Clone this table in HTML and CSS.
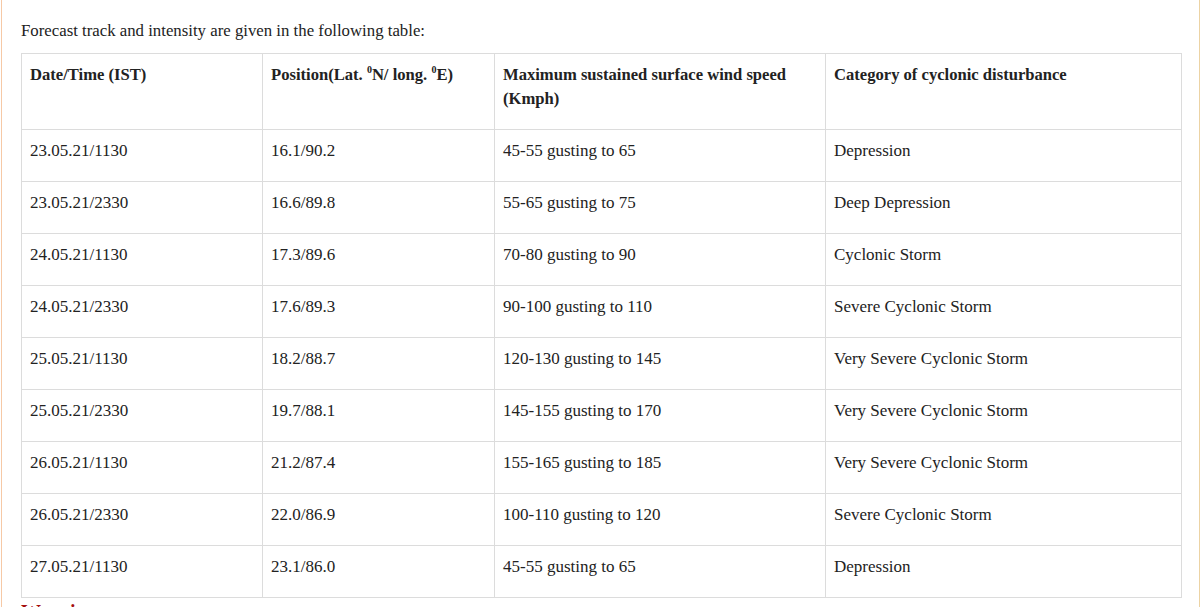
FILE: index.html
```html
<!DOCTYPE html>
<html>
<head>
<meta charset="utf-8">
<link rel="stylesheet" href="styles.css">
</head>
<body>
<div class="page">
  <div class="content">
    <p class="intro">Forecast track and intensity are given in the following table:</p>
    <table class="forecast">
      <colgroup>
        <col class="c1"><col class="c2"><col class="c3"><col class="c4">
      </colgroup>
      <thead>
        <tr>
          <th>Date/Time (IST)</th>
          <th>Position(Lat. <sup>0</sup>N/ long. <sup>0</sup>E)</th>
          <th>Maximum sustained surface wind speed (Kmph)</th>
          <th>Category of cyclonic disturbance</th>
        </tr>
      </thead>
      <tbody>
        <tr><td>23.05.21/1130</td><td>16.1/90.2</td><td>45-55 gusting to 65</td><td>Depression</td></tr>
        <tr><td>23.05.21/2330</td><td>16.6/89.8</td><td>55-65 gusting to 75</td><td>Deep Depression</td></tr>
        <tr><td>24.05.21/1130</td><td>17.3/89.6</td><td>70-80 gusting to 90</td><td>Cyclonic Storm</td></tr>
        <tr><td>24.05.21/2330</td><td>17.6/89.3</td><td>90-100 gusting to 110</td><td>Severe Cyclonic Storm</td></tr>
        <tr><td>25.05.21/1130</td><td>18.2/88.7</td><td>120-130 gusting to 145</td><td>Very Severe Cyclonic Storm</td></tr>
        <tr><td>25.05.21/2330</td><td>19.7/88.1</td><td>145-155 gusting to 170</td><td>Very Severe Cyclonic Storm</td></tr>
        <tr><td>26.05.21/1130</td><td>21.2/87.4</td><td>155-165 gusting to 185</td><td>Very Severe Cyclonic Storm</td></tr>
        <tr><td>26.05.21/2330</td><td>22.0/86.9</td><td>100-110 gusting to 120</td><td>Severe Cyclonic Storm</td></tr>
        <tr><td>27.05.21/1130</td><td>23.1/86.0</td><td>45-55 gusting to 65</td><td>Depression</td></tr>
      </tbody>
    </table>
    <h4 class="warn">Warnings</h4>
  </div>
</div>
</body>
</html>
```
FILE: styles.css
```css
html, body {
  margin: 0;
  padding: 0;
  background: #ffffff;
}
body {
  font-family: "Liberation Serif", "Times New Roman", serif;
  color: #222222;
  font-size: 17px;
  overflow: hidden;
  height: 607px;
}
.page {
  width: 1197px;
  margin-left: 1px;
  border-left: 1px solid #f6c9a6;
  border-right: 1px solid #ecd3a4;
  min-height: 607px;
}
.content {
  padding: 19px 0 0 19px;
}
.intro {
  margin: 0 0 10px 0;
  line-height: 24px;
  font-size: 16.8px;
}
.forecast {
  border-collapse: collapse;
  width: 1160px;
  table-layout: fixed;
  border: 1px solid #dcdcdc;
}
.c1 { width: 241px; }
.c2 { width: 232px; }
.c3 { width: 331px; }
.c4 { width: 356px; }
.forecast th,
.forecast td {
  border: 1px solid #dcdcdc;
  text-align: left;
  vertical-align: top;
  padding: 9px 8px 18px 8px;
  line-height: 24px;
  font-size: 17px;
}
.forecast th {
  font-weight: bold;
  font-size: 16.6px;
}
.forecast sup {
  font-size: 10px;
  line-height: 0;
  vertical-align: 7px;
}
.warn {
  margin: 0;
  padding-top: 4px;
  font-size: 20px;
  line-height: 20px;
  color: #a50f0f;
  font-weight: bold;
}
```
